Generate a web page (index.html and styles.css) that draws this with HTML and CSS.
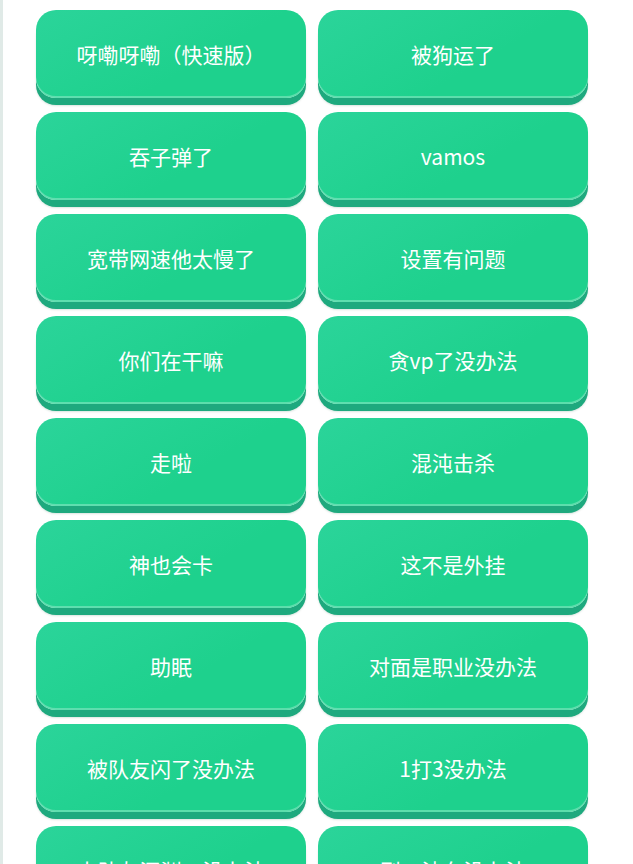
FILE: index.html
```html
<!DOCTYPE html>
<html lang="zh-CN">
<head>
<meta charset="UTF-8">
<title>语音按钮</title>
<meta name="viewport" content="width=device-width,initial-scale=1">
<link rel="stylesheet" href="styles.css">
</head>
<body>

<div id="board">
  <div class="grid">
    <button class="voice">呀嘞呀嘞（快速版）</button>
    <button class="voice">被狗运了</button>
    <button class="voice">吞子弹了</button>
    <button class="voice">vamos</button>
    <button class="voice">宽带网速他太慢了</button>
    <button class="voice">设置有问题</button>
    <button class="voice">你们在干嘛</button>
    <button class="voice">贪vp了没办法</button>
    <button class="voice">走啦</button>
    <button class="voice">混沌击杀</button>
    <button class="voice">神也会卡</button>
    <button class="voice">这不是外挂</button>
    <button class="voice">助眠</button>
    <button class="voice">对面是职业没办法</button>
    <button class="voice">被队友闪了没办法</button>
    <button class="voice">1打3没办法</button>
    <button class="voice">大队友深渊，没办法</button>
    <button class="voice">刷一波车没办法</button>
  </div>
</div>

</body>
</html>
```

FILE: styles.css
```css
:root{
  --face-a:#2bd49a;
  --face-b:#1ed18d;
  --edge:#1ea97e;
  --radius:20px;
}
html,body{margin:0; background:#fff;}
body{
  font-family:"Noto Sans CJK SC","Noto Sans",sans-serif;
  overflow:hidden;
}
#board{
  border-left:3px solid #e0eae7;
  min-height:864px;
  box-sizing:border-box;
  padding:10px 0 0 33px;
}
.grid{
  display:grid;
  grid-template-columns:270px 270px;
  column-gap:12px;
  row-gap:14px;
}
.voice{
  height:88px;
  border:0;
  border-radius:var(--radius);
  background:linear-gradient(150deg,var(--face-a),var(--face-b) 60%);
  color:#fff;
  font-family:inherit;
  font-size:21px;
  box-shadow:
    inset 0 -2px 0 rgba(255,255,255,.28),
    0 7px 0 var(--edge),
    0 8px 2px rgba(0,80,50,.15);
  cursor:pointer;
  padding:0 6px;
}
```
